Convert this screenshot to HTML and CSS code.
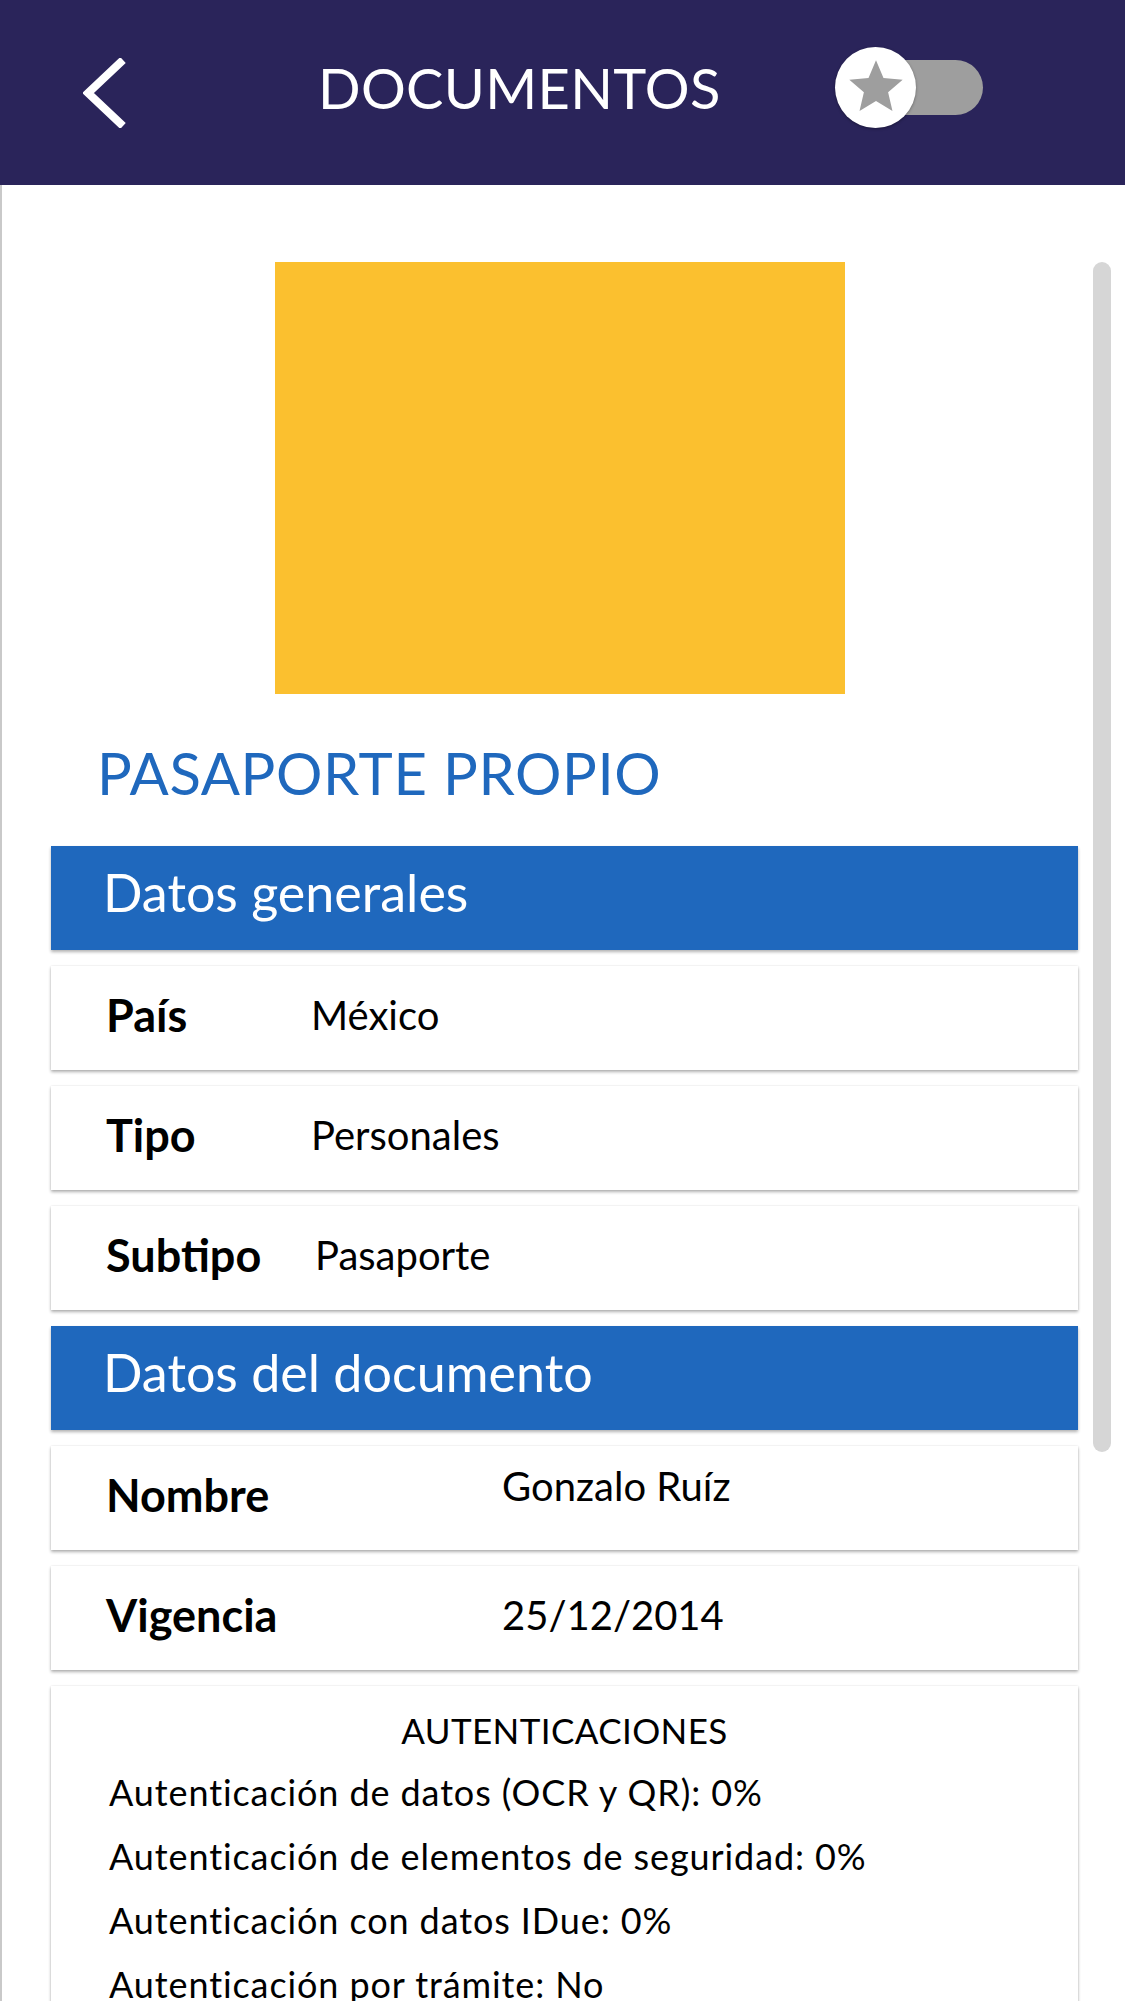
FILE: index.html
```html
<!DOCTYPE html>
<html lang="es">
  <head>
    <meta charset="UTF-8" />
    <meta name="viewport" content="width=device-width, initial-scale=1.0" />
    <title>Documentos</title>
    <link rel="stylesheet" href="styles.css">
  </head>
  <body>
    <header class="topbar">
      <a class="back" href="#" aria-label="Regresar">
        <svg width="44" height="70" viewBox="0 0 44 70">
          <polyline points="40,2 5,35 40,68" fill="none" stroke="#fff" stroke-width="8" />
        </svg>
      </a>
      <h1 class="title">DOCUMENTOS</h1>
      <div class="fav-toggle" role="switch" aria-checked="false">
        <span class="thumb">
          <svg width="64" height="64" viewBox="0 0 24 24">
            <path fill="#9e9e9e" d="M12 17.27L18.18 21l-1.64-7.03L22 9.24l-7.19-.61L12 2 9.19 8.63 2 9.24l5.46 4.73L5.82 21z" />
          </svg>
        </span>
        <span class="track"></span>
      </div>
    </header>

    <main class="content">
      <div class="scrollbar"></div>

      <div class="doc-photo"></div>
      <h2 class="doc-name">PASAPORTE PROPIO</h2>

      <div class="groups">
        <h3 class="group-title">Datos generales</h3>
        <div class="field">
          <span class="label">País</span>
          <span class="value">México</span>
        </div>
        <div class="field">
          <span class="label">Tipo</span>
          <span class="value">Personales</span>
        </div>
        <div class="field">
          <span class="label">Subtipo</span>
          <span class="value value-shift">Pasaporte</span>
        </div>

        <h3 class="group-title">Datos del documento</h3>
        <div class="field field-wide">
          <span class="label">Nombre</span>
          <span class="value value-up">Gonzalo Ruíz</span>
        </div>
        <div class="field field-wide">
          <span class="label">Vigencia</span>
          <span class="value">25/12/2014</span>
        </div>

        <div class="auth-card">
          <h4 class="auth-title">AUTENTICACIONES</h4>
          <p>Autenticación de datos (OCR y QR): 0%</p>
          <p>Autenticación de elementos de seguridad: 0%</p>
          <p>Autenticación con datos IDue: 0%</p>
          <p>Autenticación por trámite: No</p>
        </div>
      </div>
    </main>
  </body>
</html>
```

FILE: styles.css
```css
html,
body {
  margin: 0;
  overflow: hidden;
}
body {
  font-family: Lato, "Open Sans", sans-serif;
  background-color: #fff;
  color: #000;
}

/* Top bar */
.topbar {
  height: 185px;
  box-sizing: border-box;
  padding: 0 142px 10px 83px;
  background-color: #2a245a;
  display: flex;
  align-items: center;
}
.back {
  display: flex;
  margin-top: 11px;
}
.title {
  margin: 0 0 0 191px;
  font-size: 56px;
  font-weight: 400;
  letter-spacing: 0.3px;
  color: #fff;
  line-height: 1;
}
.fav-toggle {
  margin-left: auto;
  display: flex;
  align-items: center;
}
.thumb {
  position: relative;
  z-index: 1;
  width: 81px;
  height: 81px;
  border-radius: 50%;
  background-color: #fff;
  box-shadow: 0 1px 3px rgba(0, 0, 0, 0.35);
  display: flex;
  align-items: center;
  justify-content: center;
}
.thumb svg {
  margin-top: -2px;
}
.track {
  width: 108px;
  height: 55px;
  margin-left: -41px;
  border-radius: 28px;
  background-color: #9e9e9e;
}

/* Content */
.content {
  position: relative;
  height: 1816px;
  box-sizing: border-box;
  overflow: hidden;
  border-left: 2px solid #c9c9c9;
  padding: 77px 47px 0 49px;
}
.scrollbar {
  position: absolute;
  top: 77px;
  right: 14px;
  width: 18px;
  height: 1190px;
  border-radius: 9px;
  background-color: #d6d6d6;
}
.doc-photo {
  width: 570px;
  height: 432px;
  margin-left: 224px;
  background-color: #fbc02f;
}
.doc-name {
  margin: 45px 0 39px 46px;
  font-size: 58px;
  font-weight: 400;
  letter-spacing: 0.6px;
  line-height: 68px;
  color: #1f68bd;
}

.groups {
  display: flex;
  flex-direction: column;
  gap: 16px;
}
.group-title {
  margin: 0;
  height: 104px;
  box-sizing: border-box;
  padding: 0 0 12px 52px;
  font-size: 52px;
  font-weight: 400;
  line-height: 92px;
  color: #fff;
  background-color: #1f68bd;
  box-shadow: 0 2px 3px rgba(0, 0, 0, 0.3);
}
.field {
  height: 104px;
  box-sizing: border-box;
  padding: 0 0 7px 55px;
  display: flex;
  align-items: center;
  background-color: #fff;
  box-shadow: 0 2px 3px rgba(0, 0, 0, 0.3), 0 0 2px rgba(0, 0, 0, 0.1);
}
.label {
  width: 205px;
  flex-shrink: 0;
  font-size: 45px;
  font-weight: 700;
}
.field-wide .label {
  width: 396px;
}
.value {
  font-size: 40px;
}
.value-shift {
  margin-left: 4px;
}
.value-up {
  margin-bottom: 18px;
}

.auth-card {
  padding: 24px 0 0 58px;
  background-color: #fff;
  box-shadow: 0 2px 3px rgba(0, 0, 0, 0.3), 0 0 2px rgba(0, 0, 0, 0.1);
}
.auth-title {
  margin: 0 0 10px -58px;
  text-align: center;
  font-size: 35px;
  font-weight: 400;
  letter-spacing: 0.4px;
  line-height: 40px;
}
.auth-card p {
  margin: 0;
  font-size: 36px;
  letter-spacing: 0.9px;
  line-height: 64px;
}
```
